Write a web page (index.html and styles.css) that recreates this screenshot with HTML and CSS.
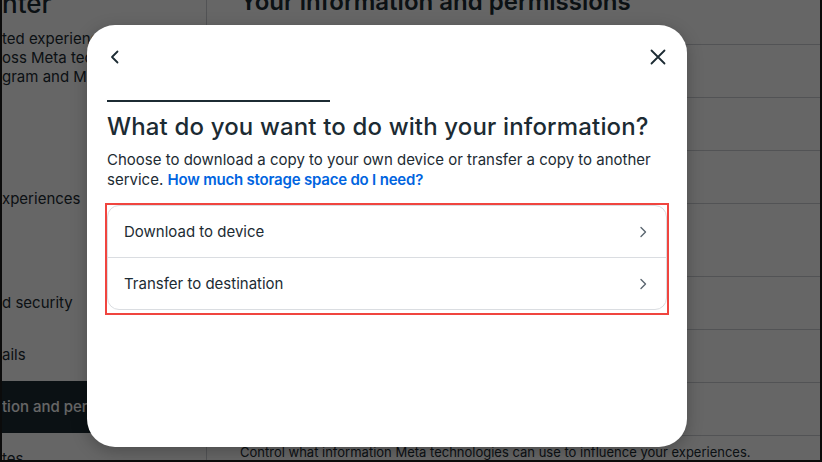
FILE: index.html
```html
<!DOCTYPE html>
<html lang="en">
<head>
    <meta charset="UTF-8">
    <meta name="viewport" content="width=device-width, initial-scale=1.0">
    <title>Your information and permissions</title>
    <link rel="stylesheet" href="styles.css">
</head>
<body>

    <div class="page">
        <div class="sidebar">
            <div class="side-title">nter</div>
            <p class="side-text">ted experiences<br>oss Meta technologies<br>gram and Meta</p>
            <div class="side-item first">xperiences</div>
            <div class="side-item second">d security</div>
            <div class="side-item">ails</div>
            <div class="side-item active">tion and permissions</div>
            <div class="side-item">tes</div>
        </div>

        <div class="main">
            <h1 class="main-title">Your information and permissions</h1>
            <div class="rows">
                <div class="row"></div>
                <div class="row"></div>
                <div class="row"></div>
                <div class="row tall"></div>
                <div class="row"></div>
                <div class="row"></div>
                <div class="row"></div>
                <div class="row last"></div>
            </div>
            <p class="main-note">Control what information Meta technologies can use to influence your experiences.</p>
        </div>

        <div class="overlay">
            <div class="modal">
                <div class="modal-top">
                    <button class="icon-btn" aria-label="Back">
                        <svg width="16" height="16" viewBox="0 0 16 16"><path d="M10.5 2.5 L5 8 L10.5 13.5" fill="none" stroke="#1c2b33" stroke-width="1.8" stroke-linecap="round" stroke-linejoin="round"/></svg>
                    </button>
                    <button class="icon-btn" aria-label="Close">
                        <svg width="18" height="18" viewBox="0 0 18 18"><path d="M2.5 2.5 L15.5 15.5 M15.5 2.5 L2.5 15.5" fill="none" stroke="#1c2b33" stroke-width="1.8" stroke-linecap="round"/></svg>
                    </button>
                </div>

                <div class="progress"></div>

                <h2>What do you want to do with your information?</h2>
                <p class="desc">Choose to download a copy to your own device or transfer a copy to another service. <a href="#">How much storage space do I need?</a></p>

                <div class="highlight">
                    <div class="options">
                        <div class="option">
                            <span>Download to device</span>
                            <svg width="10" height="12" viewBox="0 0 10 12"><path d="M3 1.5 L7.5 6 L3 10.5" fill="none" stroke="#5b6670" stroke-width="1.4" stroke-linecap="round" stroke-linejoin="round"/></svg>
                        </div>
                        <div class="option">
                            <span>Transfer to destination</span>
                            <svg width="10" height="12" viewBox="0 0 10 12"><path d="M3 1.5 L7.5 6 L3 10.5" fill="none" stroke="#5b6670" stroke-width="1.4" stroke-linecap="round" stroke-linejoin="round"/></svg>
                        </div>
                    </div>
                </div>
            </div>
        </div>
    </div>

</body>
</html>
```

FILE: styles.css
```css
* {
    margin: 0;
    padding: 0;
    box-sizing: border-box;
}

body {
    width: 822px;
    height: 462px;
    overflow: hidden;
    font-family: Inter, Roboto, "Liberation Sans", sans-serif;
    color: #1c2b33;
    background: #fff;
}

.page {
    position: relative;
    display: flex;
    width: 822px;
    height: 462px;
    overflow: hidden;
    border: 2px solid #0b0b0b;
    border-top: none;
}

/* background page */
.sidebar {
    width: 205px;
    flex-shrink: 0;
    border-right: 1px solid #ccd0d5;
    display: flex;
    flex-direction: column;
}

.side-title {
    font-size: 26px;
    font-weight: 500;
    line-height: 26px;
    margin-top: -9px;
}

.side-text {
    font-size: 15px;
    line-height: 19px;
    margin-top: 12px;
    white-space: nowrap;
}

.side-item {
    font-size: 15px;
    height: 52px;
    line-height: 52px;
    white-space: nowrap;
}

.side-item.first {
    margin-top: 87px;
}

.side-item.second {
    margin-top: 52px;
}

.side-item.active {
    background: #1c2b33;
    color: #fff;
    font-weight: 500;
}

.main {
    flex: 1;
    padding-left: 33px;
    display: flex;
    flex-direction: column;
}

.main-title {
    font-size: 24px;
    font-weight: 600;
    line-height: 24px;
    margin-top: -10px;
    white-space: nowrap;
}

.rows {
    margin-top: 30px;
}

.row {
    height: 53px;
    border-top: 1px solid #ced0d4;
    margin-left: -33px;
}

.row.tall {
    height: 73px;
}

.row.last {
    height: 9px;
}

.main-note {
    font-size: 13px;
    line-height: 17px;
    white-space: nowrap;
}

/* modal */
.overlay {
    position: absolute;
    inset: 0;
    background: rgba(0, 0, 0, 0.6);
    padding: 25px 0 0 85px;
}

.modal {
    width: 600px;
    height: 422px;
    background: #fff;
    border-radius: 28px;
    padding: 20px 20px;
    box-shadow: 0 4px 16px rgba(0, 0, 0, 0.25);
}

.modal-top {
    display: flex;
    justify-content: space-between;
    align-items: center;
    height: 24px;
    margin: 0 -3px 0 -4px;
}

.icon-btn {
    border: none;
    background: none;
    width: 24px;
    height: 24px;
    display: flex;
    align-items: center;
    justify-content: center;
}

.progress {
    width: 223px;
    height: 2px;
    background: #1c2b33;
    margin-top: 31px;
}

.modal h2 {
    font-size: 24px;
    font-weight: 500;
    line-height: 30px;
    margin-top: 10px;
    letter-spacing: 0.15px;
}

.desc {
    font-size: 15px;
    line-height: 20px;
    margin-top: 8px;
    color: #1c2b33;
}

.desc a {
    color: #0064e0;
    font-weight: 600;
    letter-spacing: -0.2px;
    text-decoration: none;
}

.highlight {
    margin-top: 13px;
    margin-left: -2px;
    width: 564px;
    border: 2px solid #f0453f;
    padding: 0 0 3px 0;
}

.options {
    border: 1px solid #dadde1;
    border-radius: 12px;
}

.option {
    display: flex;
    justify-content: space-between;
    align-items: center;
    height: 52px;
    padding: 0 18px 0 16px;
    font-size: 15px;
}

.option:first-child {
    height: 51px;
}

.option + .option {
    border-top: 1px solid #dadde1;
}
```
